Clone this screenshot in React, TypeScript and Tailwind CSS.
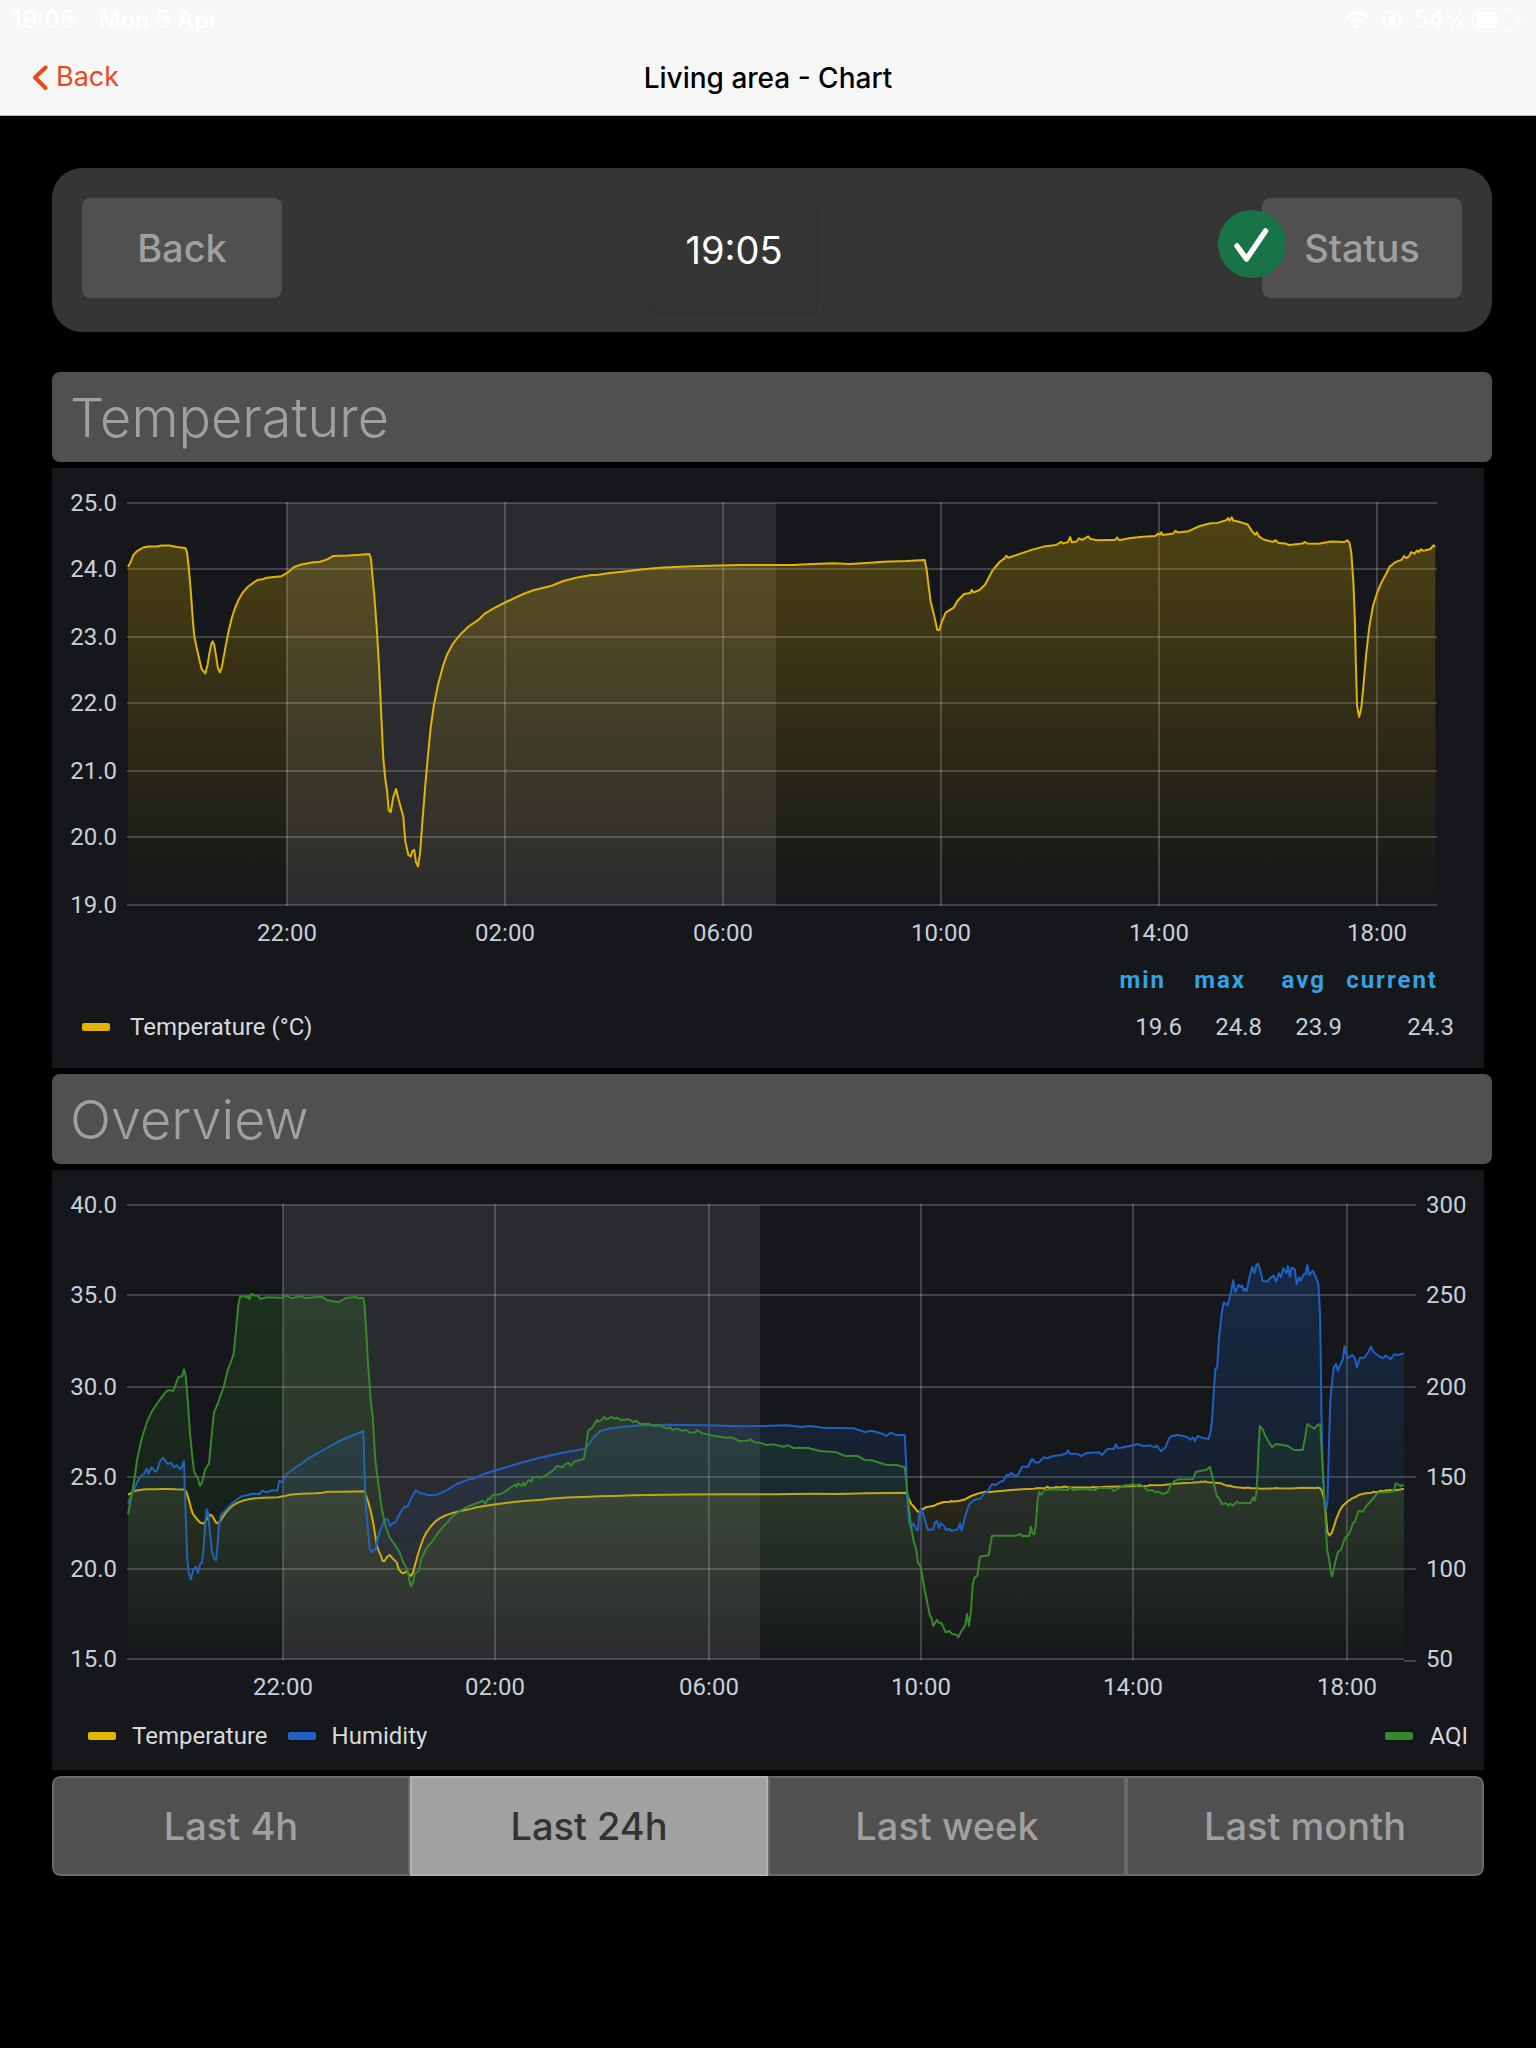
import { Fragment, useState } from 'react';

type Point = [number, number];

const RANGES = ['Last 4h', 'Last 24h', 'Last week', 'Last month'];
const HOURS = ['22:00', '02:00', '06:00', '10:00', '14:00', '18:00'];

const YELLOW = '#e0b400';
const BLUE = '#1f60c4';
const GREEN = '#37872d';

const parse = (raw: string): Point[] =>
  raw
    .trim()
    .split(/\s+/)
    .map((pair) => pair.split(',').map(Number) as Point);

const temperature = parse(`
  76,98.7 78.7,94 81.3,87.2 84.7,83.3 88,81.4 91.3,79.5 96.3,78.4 104.7,78.4 109.7,77.6 117.3,77.6 124.7,79.1
  133.3,79.9 135,84.1 136.7,98.7 139,126.2 141,154.1 142.3,168.3 144.7,179.8 147.3,191.3 149.7,201.2 153.3,205.4
  155.7,196.2 157.3,185.9 159.3,176 160.7,173.3 162.3,177.1 164.3,189.7 166,200.5 168,204.3 170,198.2 173,181.7
  176.3,164.5 179.7,150.3 183,140 186.3,132.3 190.7,124.7 195.3,119.3 201.3,114.7 206.3,111.7 210.7,111.3
  214.7,109.8 229.7,108.2 236.3,104 242,99 249.7,96.4 259.7,94.4 268,93.7 275.3,91.4 281.3,87.9 296.3,87.6
  308,86.8 317.3,86 319,91 320.3,106.3 322.3,127.4 324.7,159.9 327,198.2 329.3,247.9 331.3,290 333.3,311.1
  335,322.5 336.7,342.4 338.7,344.4 341.3,329 344,321 346.7,332.1 351.3,348.6 353.3,373.4 356.3,386.8 358.7,388.4
  360.3,383 362.3,381.9 364,394.1 366,398.3 368,385.7 370,358.9 373,320.6 375.7,290 378.7,259.4 382,236.4
  386.3,215.4 391.3,197 395.3,185.9 400.7,176 408,166.8 416.3,158.7 427.3,151.1 433,145.3 443,139.6 453,134.5
  471.3,126 481.3,122.3 499.7,117.7 511.3,113 526.3,109.3 539.7,107 544.7,107 558,105 574.7,103.3 591.3,101.3
  608,99.7 628,98.7 648,98 688,97 724.7,97 741.3,97 754.7,96.3 781.3,95.3 798,96 814.7,95 831.3,93.7 854.7,93
  872.7,92 874.7,102 876.7,118.7 878.7,133.7 882,147 885.3,162 887.3,162 889.7,154 893.7,144.7 902,139.3
  905.3,133 912,126 918.3,125 919.7,122 921.7,124.3 927.3,122.3 933,116.7 940.4,102.7 947.5,94 952.8,90.1
  954.2,87.7 956.4,89.7 967,86.1 981.2,81.4 991.8,78.6 1004.2,77 1008.9,73.9 1011.3,75.4 1015.9,74.2 1018.1,69.1
  1019.8,74.2 1024.5,73.5 1026.9,70.3 1030.1,71.9 1036.2,68.3 1038.6,71.1 1045,72.3 1057.4,71.9 1063,71.9
  1065.2,69.5 1067,72.3 1078.7,69.9 1091.1,68.7 1103.5,67.9 1106,65.5 1107.8,66.7 1109.2,64.4 1111,67.1
  1121.3,65.5 1123.4,62.8 1125.5,64.4 1136.5,63.2 1147.9,58 1158.5,55.3 1165.6,54.9 1174.5,52.1 1175.9,50.1
  1177.6,52.5 1179.8,49.3 1181.2,52.5 1186.9,53.7 1195.7,56.5 1200.3,63.6 1203.5,66.7 1205,64.4 1207.1,68.7
  1211.7,71.5 1220.6,73.9 1223.4,72.3 1226.6,75 1233,75.4 1237.2,77 1250.7,75.4 1252.5,73.9 1255,75.4
  1266.7,75.8 1279.1,73.5 1292.5,73.9 1295.4,72.3 1297.5,75 1299.3,84.9 1301.4,114.6 1302.8,150.2 1303.9,197.6
  1305,237.2 1307.1,249 1309.2,240.3 1311.3,219.4 1314.2,185.8 1317.4,158.1 1320.9,138.3 1325.2,124.5
  1329.4,114.6 1334.7,104.7 1337.6,98.8 1342.9,94.4 1350,91.6 1352.1,88.1 1354.2,90.1 1357.1,88.1 1359.2,84.1
  1362.4,85.7 1365.2,82.5 1367,84.1 1368.8,81.4 1371.3,82.9 1378.4,81 1381.5,77.4 1383.3,78.6
`);

const humidity = parse(`
  76,333.3 79.7,325 84.7,313.3 88,306.7 92,303.7 94.7,298.7 96.3,303.7 99.7,297.3 103.3,301.7 105.3,300 108,291
  111.3,287.7 115.7,294 119,292.7 122,297.3 124.7,295.3 128.3,299.3 130.3,296 132,290.7 132.7,316.7 134,353.3
  135.3,390 136.7,402.7 139,409.3 141.3,399.3 144,396.7 146,402.7 148,394.3 150,392 151.7,376.7 153.3,353.3
  154.7,339.3 156.3,343.3 158,363.3 160,381.7 162,388.3 164,390.3 165.7,373.3 167.3,351.7 169,345 174.7,339
  181.3,332.3 189.7,326.3 196.3,325 199,323.7 204.7,324 207,324.5 210.3,320.7 214,322.3 221.3,320.3 225.3,320.7
  227.3,310.7 230.7,312.7 234.7,303.7 244.7,296.7 258,287.7 271.3,280 288,270.7 301.3,265.3 311.3,261.3
  312.3,293.3 313.7,333.3 315.7,356.7 317.7,379 320,382.3 321.7,380 323.7,379.3 326,366.7 328.7,359 332.7,350
  335.7,349.3 338,356 340.7,353.3 343.7,352 348,343.3 352,337.3 355.7,336 359.7,327.3 363.7,320.3 368,323
  376.3,325 384.7,324.7 394.7,320.3 404.7,314 418,309 422,308.7 431.3,304.3 444.7,300 468,293 488,287.7
  508,283.3 533,278.7 536.3,275 541.3,267.7 548,261.3 556.3,258.7 571.3,256.7 591.3,255.3 614.7,254.7
  654.7,255.3 688,256.3 708,256 734.7,255.3 749.7,257 758,256 771.3,257.7 801.3,258.3 813,262 819.7,260.7
  831.3,264 834,266 839,262.7 843,264.7 852.7,265.3 854,290 855.3,330 857,351.7 858.7,357.7 861.3,353.3
  864.7,360 866,360 867.3,343.3 869,338.3 872,346.7 876,360 881.3,359.3 883,352.3 885,351 887,358.3 888.7,353.3
  892,356 894,360 897.3,358.7 899.3,361 906,359.3 908,353.3 909.7,360.7 913,346.7 917.3,334 922,330 929,328.3
  932,323.3 934.7,322.7 940,314 943.7,315 948,312 951.4,310.7 954.8,304.7 957.6,305.3 959.3,302.7 962.4,305.7
  965.8,305 970.2,296.7 976,296.7 978.8,291 980.5,289 983.2,292.3 986.3,292.7 991.8,287.3 995.2,288.3 1001,286
  1009.5,285 1014.7,283.3 1016,280.3 1018.1,283.7 1024.9,283.7 1029.4,286 1033.5,283.3 1047.1,282.3 1049.9,285
  1055.7,278.7 1061.8,279 1063.9,274.3 1065.9,278.3 1077.9,276 1085.8,274 1091.6,276.3 1098.4,275.3 1102.5,277.3
  1104.9,275.7 1109,281.3 1113.5,277.3 1116.2,270 1118.9,266.3 1125.8,265 1134.3,266.7 1138.8,269.7 1140.8,267.3
  1142.9,271 1145.6,266 1150.4,267.7 1156.5,269 1158.6,261.7 1160,250 1161.7,223.3 1163.4,198.7 1165.1,197.7
  1167.1,166.7 1169.9,141.7 1171.9,132.3 1175.7,135.3 1179.1,121.7 1181.2,110.3 1183.2,122 1186.6,115 1188.6,117
  1190,115.3 1191.8,120.7 1193.1,118.7 1194.8,121 1197.6,106.7 1200.3,97 1202.4,103.3 1204.4,95.3 1206.1,93.7
  1208.2,100 1210.6,110.7 1215.4,111.7 1218.1,108 1221.8,105.7 1223.9,111.7 1227,103.3 1229,107.3 1231.1,98.3
  1234.5,103.3 1235.9,96 1237.9,106.7 1239.6,97.7 1242.7,99.3 1244.8,114 1247.1,107.3 1248.9,111 1251.6,104.3
  1253.6,104 1255.3,95 1257.1,105 1260.8,100.7 1263.9,107.3 1266.3,113.3 1268,143.3 1268.7,183.3 1269.4,243.3
  1270.7,296.7 1272.4,330 1274.5,338.3 1275.5,330 1276.9,276.7 1278.3,230 1280.3,210 1281.7,197.7 1284.1,193.7
  1285.8,201 1287.8,195.7 1290.9,189.3 1292.6,176 1294,183.3 1296,188.3 1300.1,185 1302.9,187.7 1304.9,197.3
  1308,187.7 1312.4,187.7 1316.5,181.7 1318.9,176.7 1321.7,182 1328.2,187 1331.6,188.3 1333.6,185.3 1338.4,189.3
  1342.2,184.3 1346.3,185 1351.8,183.3
`);

const aqi = parse(`
  76,344.3 80,323.3 83,305 85,290 89.3,270 95,251.7 99.7,241.7 104.7,234 107.3,230.7 113,222.7 116.3,220
  121.3,221 126.3,207.3 130.3,206 132,199.3 133.7,206 135.7,230 138,263.3 140.3,286.7 142.3,302.3 145.7,307.7
  148,316 150,312.7 153,300 157,293.3 159,271.7 162,242.3 165.3,235 168,226.7 171.3,218.3 175.7,200 179.7,190
  181.7,183.3 184,160 186.3,135 188,126.7 192,126 194.7,127.7 196,125.7 197.7,129.3 199.3,124 203,125.7
  206.3,125.7 208.3,129 214.7,127.3 229.7,127.7 234.7,125.7 239.7,128.3 248,126.3 253,128 269.7,126.7 274.7,130
  286.3,132.3 294,128 303,127 308,128.3 311,127.7 312.3,133.3 314,156.7 316,193.3 318.7,230 320.7,246.7
  323.3,290 326.3,313.3 329.7,338.3 333.7,356.7 337.3,366.7 343,375 347.3,381.7 351.3,392.3 355.3,399.3
  357.3,410 359,416.3 361,412.7 362.7,403.3 366.7,401 369.7,387.7 374.7,377.7 379.7,372 384.7,364.7 391.3,356.7
  399.7,347.3 408,340.7 418,335.7 424.7,333.3 431.3,330.7 433.3,334 436.3,328.3 438,329.3 440.7,325 448,324.3
  453,321.7 458,318 463,314.7 464.7,316.7 466,313.3 469.7,316 471.3,312.3 473,315.7 476.3,310 479.3,311.7
  480.7,307.7 484.7,306.7 489.7,307.7 499.7,301.7 505.3,296 510.7,297.3 513,294 517,293 518.7,296 522,291.7
  532,288.7 534,276.7 536,261 540.7,257.3 544.7,250 546.3,251.7 550.3,249.3 552,247 554.7,249.3 559.3,247
  563,248.7 565.3,247.7 568.7,250 577.3,249.3 581.3,252 584.3,250.7 588,254 596.3,253.7 602,256 607.3,255
  614.7,258.3 618.7,257.7 620.7,260.3 624.7,258.3 629.7,260.7 634.7,260 637,262.3 643,262.7 645.3,260
  649.7,263.3 658,265 664.7,266.3 674.7,267.7 679.7,267.3 686.3,270.7 694.7,271 698,269.3 703,272.3 708,272.7
  714.7,275 721.3,274.3 731.3,276.7 736.3,275.3 741.3,278 748,277.7 756.3,278 768,281 784.7,282.3 793,286
  804.7,285.7 813,290 819.7,290.3 834.7,295 844.7,295 852.7,297.3 854,310 856.3,330 858.7,353.3 861.3,370
  864,378.3 866,392.7 869,397.3 872.7,420 875.3,432.7 878,446 879.3,447.3 881.3,456 885,449.7 886.7,452.7
  889.3,452.7 893.7,462.3 897.3,461 899.7,463.7 905.3,465.3 906.3,467.3 908.7,462.3 913.3,455 915,444 917,455.7
  918.7,443.3 920.7,415 922.3,408 925.3,405.7 928,386.7 936.7,385 940,365.7 963.4,365.7 968.5,364 970.2,366
  977.4,366 978.8,356.7 980.8,364 982.5,364 983.9,353.3 985.6,330 987.3,321.7 989.4,324.7 992.4,320 1004.4,319.3
  1015.7,320 1017.7,316.7 1020.8,320.3 1027.3,319 1043.7,320 1047.1,317.7 1059.1,318.3 1061.8,321 1069.4,316.7
  1073.8,315 1077.9,315.3 1080.6,314.3 1084.8,315.7 1087.1,314 1091.6,316.7 1096,320.7 1100.1,320 1103.6,322.3
  1106,321.3 1110.4,324 1115.5,322.3 1118.9,315 1122.4,311 1126.5,309.3 1141.2,309 1143.9,301.7 1154.8,299.7
  1157.9,296.7 1160,305 1163.4,320 1165.1,326.7 1166.8,327.7 1169.9,334 1174.7,333.3 1176,335.7 1178.1,333.7
  1181.2,335.7 1184.9,331.3 1187.3,333.3 1198.6,332.7 1201,327.3 1202.7,330.7 1204.4,323.3 1205.8,296.7
  1206.8,273.3 1207.8,256 1210.6,259.3 1214.7,268.3 1220.1,277.3 1223.9,274 1235.2,275.7 1242,280 1250.6,280
  1253,268.3 1255.3,254 1259.1,256.7 1262.5,258.7 1264.6,255.7 1268.3,254 1269.4,276.7 1271.4,310 1273.1,343.3
  1275.2,380 1277.2,390 1278.9,403.3 1280.3,406.3 1283,393.3 1285.8,382.3 1289.2,379.3 1292.6,368.7 1297.4,363.3
  1301.2,352.7 1302.9,351.7 1306.3,341 1310.4,341.7 1313.8,336.7 1320.6,329 1325.8,322.7 1339.5,322 1341.8,320
  1343.9,313.3 1349,316 1351.8,314.7
`);

// Same readings, on the 15-40 degree axis of the overview chart
const overviewTemperature = temperature.map(
  ([x, y]): Point => [76 + (x - 76) * 0.976, 307.4 + (y - 35) * 0.271]
);

interface Series {
  id: string;
  color: string;
  points: Point[];
}

interface ChartProps {
  label: string;
  height: number;
  rows: { y: number; left: string; right?: string }[];
  columns: number[];
  plotRight: number;
  night: [number, number];
  series: Series[];
}

function Chart({ label, height, rows, columns, plotRight, night, series }: ChartProps) {
  const top = rows[0].y;
  const bottom = rows[rows.length - 1].y;

  return (
    <svg viewBox={`0 0 1432 ${height}`} className="block w-full font-[Roboto,sans-serif]" role="img" aria-label={label}>
      <defs>
        {series.map((s) => (
          <linearGradient key={s.id} id={s.id} gradientUnits="userSpaceOnUse" x1="0" y1={top} x2="0" y2={bottom}>
            <stop offset="0" stopColor={s.color} stopOpacity="0.29" />
            <stop offset="1" stopColor={s.color} stopOpacity="0" />
          </linearGradient>
        ))}
      </defs>

      {/* Night time */}
      <rect x={night[0]} y={top} width={night[1] - night[0]} height={bottom - top} fill="#fff" fillOpacity="0.09" />

      {/* Grid */}
      <g stroke="#fff" strokeOpacity="0.19" strokeWidth="2">
        {rows.map((row) => (
          <line key={row.left} x1="75" x2={plotRight} y1={row.y} y2={row.y} />
        ))}
        {columns.map((x) => (
          <line key={x} x1={x} x2={x} y1={top - 1} y2={bottom + 1} />
        ))}
        {rows.map((row, i) =>
          row.right ? (
            <line
              key={row.right}
              x1={plotRight}
              x2={plotRight + 12}
              y1={i === rows.length - 1 ? row.y + 2 : row.y}
              y2={i === rows.length - 1 ? row.y + 2 : row.y}
            />
          ) : null
        )}
      </g>

      {series.map((s) => (
        <Fragment key={s.id}>
          <polygon
            fill={`url(#${s.id})`}
            points={`${s.points[0][0]},${bottom} ${s.points.join(' ')} ${s.points[s.points.length - 1][0]},${bottom}`}
          />
          <polyline fill="none" stroke={s.color} strokeWidth="2" strokeLinejoin="round" points={s.points.join(' ')} />
        </Fragment>
      ))}

      {/* Axis labels */}
      <g fill="#c7d0d9" fontSize="24">
        {rows.map((row) => (
          <g key={row.left}>
            <text x="65" y={row.y + 8} textAnchor="end">
              {row.left}
            </text>
            {row.right && (
              <text x="1374" y={row.y + 8}>
                {row.right}
              </text>
            )}
          </g>
        ))}
        {columns.map((x, i) => (
          <text key={x} x={x} y={bottom + 36} textAnchor="middle">
            {HOURS[i]}
          </text>
        ))}
      </g>
    </svg>
  );
}

function SectionTitle({ children }: { children: string }) {
  return (
    <h2 className="flex h-[90px] items-center rounded-lg bg-[#505050] px-[18px] text-[54px] font-light text-[#a0a0a0]">
      {children}
    </h2>
  );
}

function StatusBar() {
  return (
    <div className="flex h-10 items-center px-3 text-2xl font-medium text-white">
      <span>19:05</span>
      <span className="ml-6">Mon 5 Apr</span>
      <div className="ml-auto flex items-center gap-3">
        <svg width="26" height="20" viewBox="0 0 26 20" fill="none" stroke="#fff" strokeWidth="4" aria-hidden="true">
          <path d="M2 7.5a15.5 15.5 0 0 1 22 0" />
          <path d="M7 12.5a8.5 8.5 0 0 1 12 0" />
          <path d="M13 19.5l-3.2-3.3a4.6 4.6 0 0 1 6.4 0z" fill="#fff" stroke="none" />
        </svg>
        <svg width="20" height="20" viewBox="0 0 20 20" fill="none" stroke="#fff" strokeWidth="2" aria-hidden="true">
          <path d="M17.5 13.5a8.5 8.5 0 1 1 .9-4" />
          <path d="M15.5 8.5h5l-2.5 3.5z" fill="#fff" stroke="none" />
          <rect x="6.5" y="9" width="7" height="6" rx="1" fill="#fff" stroke="none" />
          <path d="M8 9.5v-2a2 2 0 0 1 4 0v2" strokeWidth="1.5" />
        </svg>
        <div className="flex items-center gap-1">
          <span>54%</span>
          <svg width="52" height="24" viewBox="0 0 52 24" aria-hidden="true">
            <rect x="1" y="1" width="45" height="22" rx="6" fill="none" stroke="#fff" strokeOpacity="0.5" strokeWidth="2" />
            <rect x="4" y="4" width="21" height="16" rx="3" fill="#fff" />
            <path d="M49 8c3 1 3 7 0 8z" fill="#fff" fillOpacity="0.5" />
          </svg>
        </div>
      </div>
    </div>
  );
}

function LegendItem({ name, swatch }: { name: string; swatch: string }) {
  return (
    <span className="flex items-center gap-4">
      <span className={`h-2 w-7 rounded-[2px] ${swatch}`} />
      {name}
    </span>
  );
}

export default function App() {
  const [range, setRange] = useState('Last 24h');

  return (
    <div className="min-h-screen bg-black font-[Inter,sans-serif]">
      <header className="border-b border-[#bdbdbd] bg-[#f7f7f7]">
        <StatusBar />
        <div className="grid h-[75px] grid-cols-3 items-center px-8 text-[28px]">
          <a href="#" className="flex items-center gap-2 text-[27px] text-[#e8491d]">
            <svg width="16" height="26" viewBox="0 0 16 26" fill="none" stroke="currentColor" strokeWidth="4" strokeLinecap="round" strokeLinejoin="round" aria-hidden="true">
              <path d="M13.5 2.5L3 12.5L13.5 23" />
            </svg>
            Back
          </a>
          <h1 className="text-center font-medium text-black">Living area - Chart</h1>
        </div>
      </header>

      <main className="pt-[52px] pr-11 pb-12 pl-[52px]">
        <div className="grid grid-cols-[200px_370fr_164px_446fr_200px] items-start rounded-[30px] bg-[#353535] px-[30px] pt-[30px] pb-5">
          <button className="col-start-1 h-[100px] rounded-lg bg-[#505050] text-[38px] font-medium text-[#a0a0a0]">Back</button>
          <div className="col-start-3 flex h-[114px] items-center justify-center rounded-lg bg-[#353535] pb-2.5 text-[38px] text-white shadow-[0_2px_4px_rgba(0,0,0,0.14)]">
            19:05
          </div>
          <div className="relative col-start-5">
            <button className="h-[100px] w-full rounded-lg bg-[#505050] text-[38px] font-medium text-[#a0a0a0]">Status</button>
            <svg className="absolute top-3 -left-11" width="68" height="68" viewBox="0 0 68 68" aria-hidden="true">
              <circle cx="34" cy="34" r="34" fill="#187347" />
              <path d="M19 36L28.5 49L47.5 21" fill="none" stroke="#fff" strokeWidth="5.5" strokeLinecap="round" strokeLinejoin="round" />
            </svg>
          </div>
        </div>

        <div className="mt-10 flex flex-col gap-1.5">
          <SectionTitle>Temperature</SectionTitle>
          <section className="mr-2 bg-[#15171a] pb-[18px]">
            <Chart
              label="Temperature"
              height={488}
              rows={[
                { y: 35, left: '25.0' },
                { y: 101, left: '24.0' },
                { y: 169, left: '23.0' },
                { y: 235, left: '22.0' },
                { y: 303, left: '21.0' },
                { y: 369, left: '20.0' },
                { y: 437, left: '19.0' },
              ]}
              columns={[235, 453, 671, 889, 1107, 1325]}
              plotRight={1385}
              night={[235, 724]}
              series={[{ id: 'temp', color: YELLOW, points: temperature }]}
            />
            <div className="pr-[30px] pl-[30px] font-[Roboto,sans-serif] text-2xl text-[#c7d0d9]">
              <table className="w-full table-fixed">
                <colgroup>
                  <col />
                  <col className="w-20" />
                  <col className="w-20" />
                  <col className="w-20" />
                  <col className="w-28" />
                </colgroup>
                <thead>
                  <tr className="h-[47px] font-bold tracking-[2px] text-[#33a2e5]">
                    <td />
                    <th className="pr-4 text-right">min</th>
                    <th className="pr-4 text-right">max</th>
                    <th className="pr-4 text-right">avg</th>
                    <th className="pr-4 text-right">current</th>
                  </tr>
                </thead>
                <tbody>
                  <tr className="h-[47px]">
                    <td className="text-[#d8d9da]">
                      <span className="flex items-center gap-5">
                        <span className="h-2 w-7 rounded-[2px] bg-[#e0b400]" />
                        Temperature (°C)
                      </span>
                    </td>
                    <td className="text-right">19.6</td>
                    <td className="text-right">24.8</td>
                    <td className="text-right">23.9</td>
                    <td className="text-right">24.3</td>
                  </tr>
                </tbody>
              </table>
            </div>
          </section>

          <SectionTitle>Overview</SectionTitle>
          <section className="mr-2 bg-[#15171a] pb-2">
            <Chart
              label="Temperature, humidity and AQI"
              height={540}
              rows={[
                { y: 35, left: '40.0', right: '300' },
                { y: 125, left: '35.0', right: '250' },
                { y: 217, left: '30.0', right: '200' },
                { y: 307, left: '25.0', right: '150' },
                { y: 399, left: '20.0', right: '100' },
                { y: 489, left: '15.0', right: '50' },
              ]}
              columns={[231, 443, 657, 869, 1081, 1295]}
              plotRight={1352}
              night={[231, 708]}
              series={[
                { id: 'overview-temp', color: YELLOW, points: overviewTemperature },
                { id: 'overview-humidity', color: BLUE, points: humidity },
                { id: 'overview-aqi', color: GREEN, points: aqi },
              ]}
            />
            <div className="flex h-[52px] items-center gap-5 pr-4 pl-9 font-[Roboto,sans-serif] text-2xl text-[#d8d9da]">
              <LegendItem name="Temperature" swatch="bg-[#e0b400]" />
              <LegendItem name="Humidity" swatch="bg-[#1f60c4]" />
              <div className="ml-auto">
                <LegendItem name="AQI" swatch="bg-[#37872d]" />
              </div>
            </div>
          </section>

          {/* Time range */}
          <div className="mr-2 flex h-[100px] overflow-hidden rounded-lg">
            {RANGES.map((name) => (
              <button
                key={name}
                onClick={() => setRange(name)}
                aria-pressed={range === name}
                className={`flex-1 border-2 text-[38px] font-medium first:rounded-l-lg last:rounded-r-lg ${
                  range === name ? 'border-[#b3b3b3] bg-[#a1a1a1] text-[#333333]' : 'border-[#6a6a6a] bg-[#505050] text-[#a0a0a0]'
                }`}
              >
                {name}
              </button>
            ))}
          </div>
        </div>
      </main>
    </div>
  );
}
